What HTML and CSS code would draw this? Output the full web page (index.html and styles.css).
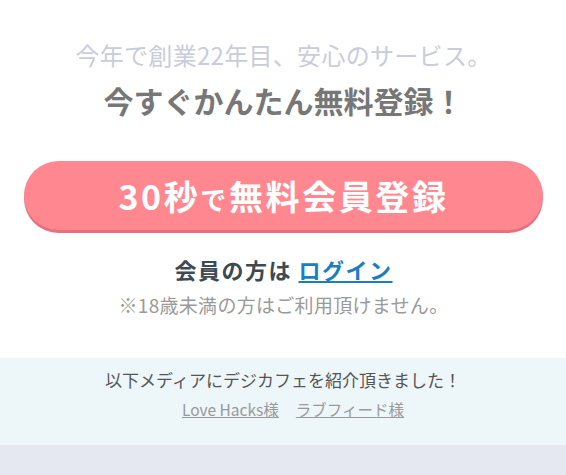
FILE: index.html
```html
<!DOCTYPE html>
<html lang="ja">
<head>
<meta charset="utf-8">
<link rel="stylesheet" href="styles.css">
</head>
<body>
<section class="signup">
  <p class="lead">今年で創業22年目、安心のサービス。</p>
  <h2 class="title">今すぐかんたん無料登録！</h2>
  <a class="cta" href="#">30秒<span class="small">で</span>無料会員登録</a>
  <p class="login">会員の方は <a href="#">ログイン</a></p>
  <p class="note">※18歳未満の方はご利用頂けません。</p>
</section>
<section class="media">
  <p class="media-text">以下メディアにデジカフェを紹介頂きました！</p>
  <p class="media-links"><a href="#">Love Hacks様</a><a href="#">ラブフィード様</a></p>
</section>
<footer class="bottom"></footer>
</body>
</html>
```
FILE: styles.css
```css
* { box-sizing: border-box; }
html, body { margin: 0; padding: 0; }
body {
  font-family: "Noto Sans CJK JP", "Noto Sans", sans-serif;
  background: #fff;
  overflow: hidden;
}
p, h2 { margin: 0; }
.signup {
  padding: 39px 23px 40px 24px;
  display: flex;
  flex-direction: column;
  align-items: center;
  text-align: center;
}
.lead {
  font-size: 24px;
  line-height: 32px;
  letter-spacing: 0.3px;
  color: #c9ccdb;
}
.title {
  margin-top: 9px;
  font-size: 30px;
  line-height: 40px;
  font-weight: 700;
  color: #777;
}
.cta {
  margin-top: 41px;
  align-self: stretch;
  height: 69px;
  border-radius: 35px;
  background: #ff8790;
  box-shadow: 0 3px 0 #e8707e;
  display: flex;
  align-items: center;
  justify-content: center;
  color: #fff;
  text-decoration: none;
  font-size: 34px;
  font-weight: 700;
  letter-spacing: 2.6px;
}
.cta .small { font-size: 26px; margin-top: 6px; }
.login {
  margin-top: 25px;
  font-size: 22px;
  line-height: 28px;
  letter-spacing: 1.5px;
  font-weight: 700;
  color: #3d4a51;
}
.login a { color: #1a7fc1; text-decoration: underline; }
.note {
  margin-top: 9px;
  font-size: 19px;
  line-height: 26px;
  letter-spacing: 0.3px;
  color: #9a9a9a;
}
.media {
  background: #edf6f9;
  padding: 10px 0 25px;
  text-align: center;
}
.media-text {
  font-size: 17px;
  line-height: 24px;
  color: #555;
}
.media-links {
  margin-top: 6px;
  padding-left: 20px;
  font-size: 15.5px;
  line-height: 22px;
  display: flex;
  justify-content: center;
  gap: 17px;
}
.media-links a { color: #999; text-decoration: underline; }
.bottom {
  background: #e5e8f1;
  height: 40px;
}
```
